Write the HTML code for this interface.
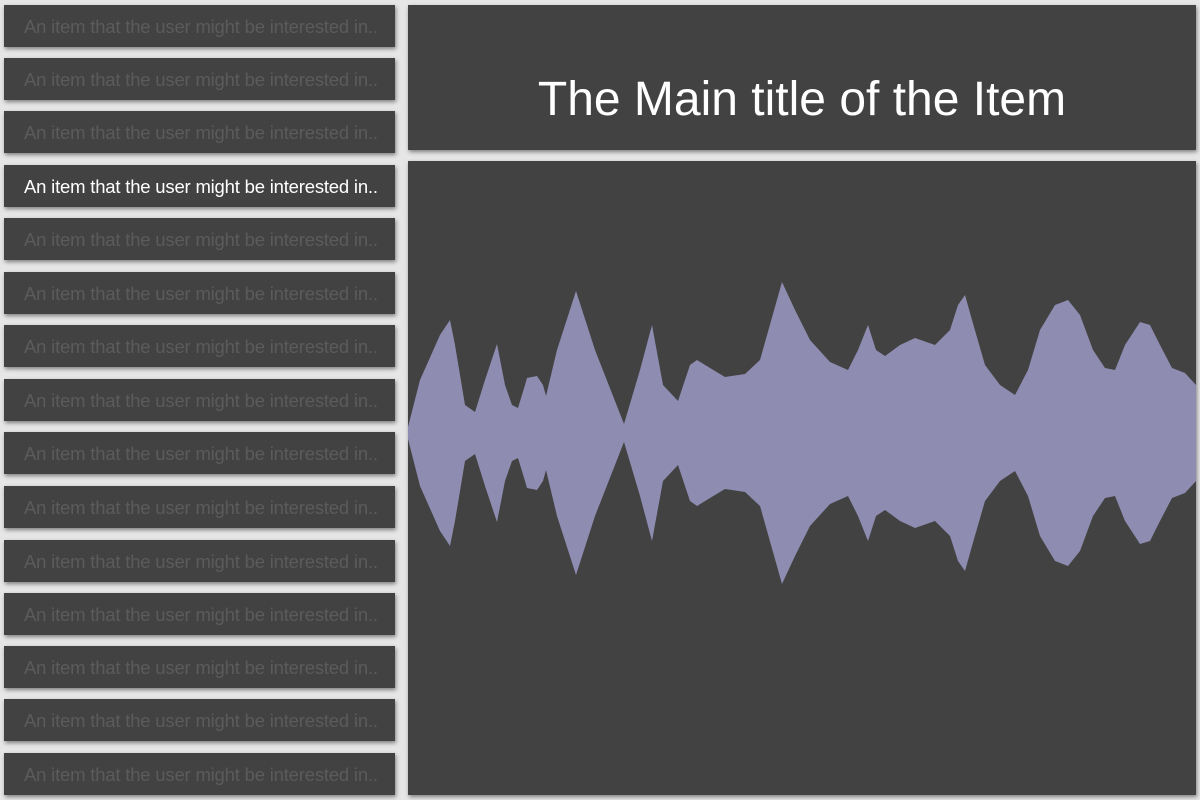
<!DOCTYPE html>
<html><head><meta charset="utf-8"><style>
html,body{margin:0;padding:0;width:1200px;height:800px;overflow:hidden;background:#e6e6e6;font-family:"Liberation Sans",Arial,sans-serif;}
.it{position:absolute;left:4px;width:391px;height:42px;background:#424242;box-shadow:1px 2px 4px rgba(0,0,0,.45);color:#5b5b5b;font-size:18.5px;line-height:43px;padding-left:20px;box-sizing:border-box;white-space:nowrap;letter-spacing:-0.2px}
.it.a{color:#fff}
.p{position:absolute;left:408px;width:788px;background:#424242;box-shadow:1px 2px 4px rgba(0,0,0,.45)}
.t{top:5px;height:145px;color:#fff;font-size:48px;text-align:center;line-height:190px}
</style></head><body>
<div class="it" style="top:5px">An item that the user might be interested in..</div>
<div class="it" style="top:58px">An item that the user might be interested in..</div>
<div class="it" style="top:111px">An item that the user might be interested in..</div>
<div class="it a" style="top:165px">An item that the user might be interested in..</div>
<div class="it" style="top:218px">An item that the user might be interested in..</div>
<div class="it" style="top:272px">An item that the user might be interested in..</div>
<div class="it" style="top:325px">An item that the user might be interested in..</div>
<div class="it" style="top:379px">An item that the user might be interested in..</div>
<div class="it" style="top:432px">An item that the user might be interested in..</div>
<div class="it" style="top:486px">An item that the user might be interested in..</div>
<div class="it" style="top:540px">An item that the user might be interested in..</div>
<div class="it" style="top:593px">An item that the user might be interested in..</div>
<div class="it" style="top:646px">An item that the user might be interested in..</div>
<div class="it" style="top:699px">An item that the user might be interested in..</div>
<div class="it" style="top:753px">An item that the user might be interested in..</div>
<div class="p t">The Main title of the Item</div>
<div class="p" style="top:161px;height:634px"></div>
<svg style="position:absolute;left:0;top:0" width="1200" height="800"><path fill="#8e8cb0" d="M408,427L420,380L440,335L450,320L455,345L465,405L475,412L485,380L497,344L505,385L512,405L518,408L525,385L527,378L537,376L543,385L546,396L557,350L576,291L595,350L624,424L640,370L652,325L663,385L678,401L690,365L697,360L710,368L725,377L745,374L760,360L782,282L795,310L810,340L830,362L848,370L858,350L868,325L876,350L885,356L900,345L915,338L935,345L950,330L958,305L965,295L972,320L985,365L1000,385L1015,395L1028,370L1040,330L1055,305L1068,300L1080,315L1093,350L1105,368L1115,370L1125,345L1140,322L1150,325L1160,345L1172,368L1185,373L1196,385L1196,481L1185,493L1172,498L1160,521L1150,541L1140,544L1125,521L1115,496L1105,498L1093,516L1080,551L1068,566L1055,561L1040,536L1028,496L1015,471L1000,481L985,501L972,546L965,571L958,561L950,536L935,521L915,528L900,521L885,510L876,516L868,541L858,516L848,496L830,504L810,526L795,556L782,584L760,506L745,492L725,489L710,498L697,506L690,501L678,465L663,481L652,541L640,496L624,442L595,516L576,575L557,516L546,470L543,481L537,490L527,488L525,481L518,458L512,461L505,481L497,522L485,486L475,454L465,461L455,521L450,546L440,531L420,486L408,439Z"/></svg>
</body></html>
